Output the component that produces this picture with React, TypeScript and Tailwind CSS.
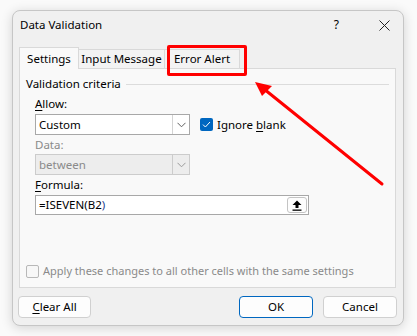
import React from "react";

const font = { fontFamily: '"Segoe UI", "Noto Sans", "Open Sans", sans-serif' };

function Chevron({ color = "#606060" }: { color?: string }) {
  return (
    <svg width="9" height="6" viewBox="0 0 9 6" fill="none">
      <path d="M0.5 0.8 L4.5 4.8 L8.5 0.8" stroke={color} strokeWidth="1" />
    </svg>
  );
}

function Select({ value, disabled }: { value: string; disabled?: boolean }) {
  return (
    <div
      className={`flex h-[21px] w-[155px] items-stretch border ${
        disabled ? "border-[#cccccc] bg-[#ededed] text-[#8a8a8a]" : "border-[#a8a8a8] bg-white text-black"
      }`}
    >
      <div className="flex flex-1 items-center pl-[3px] text-[11.5px]">{value}</div>
      <div
        className={`flex w-[17px] items-center justify-center border-l ${
          disabled ? "border-[#cccccc]" : "border-[#d4d4d4]"
        }`}
      >
        <Chevron color={disabled ? "#9a9a9a" : "#606060"} />
      </div>
    </div>
  );
}

export default function App() {
  return (
    <div
      className="relative h-[336px] w-[417px] overflow-hidden bg-[#fafafa] pl-[12px] pt-[10px] text-[11px] leading-[14px] text-black"
      style={font}
    >
      <div className="flex h-[316px] w-[392px] flex-col rounded-[8px] border border-[#c6c6c6] bg-[#f0f0f0] shadow-[0_2px_12px_rgba(0,0,0,0.16)]">
        {/* title bar */}
        <div className="flex h-[36px] items-start pl-[7px] pr-[13px] pt-[7px]">
          <span className="text-[11.5px]">Data Validation</span>
          <span className="ml-auto mr-[40px] text-[12px]">?</span>
          <svg className="mt-[2px]" width="11" height="11" viewBox="0 0 11 11">
            <path d="M0.5 0.5 L10.5 10.5 M10.5 0.5 L0.5 10.5" stroke="#222" strokeWidth="1" />
          </svg>
        </div>

        {/* tabs */}
        <div className="flex items-end pl-[6px]">
          <div className="relative z-10 -mb-px flex h-[22px] w-[60px] items-center justify-center border border-b-0 border-[#d9d9d9] bg-[#f9f9f9] text-[11.5px]">
            Settings
          </div>
          <div className="flex h-[19px] w-[86px] items-center justify-center border-t border-r border-[#d9d9d9] bg-[#f3f3f3] text-[11.5px]">
            Input Message
          </div>
          <div className="flex h-[19px] w-[75px] items-center justify-center border-t border-r border-[#d9d9d9] bg-[#f3f3f3] text-[11.5px]">
            Error Alert
          </div>
        </div>

        {/* panel */}
        <div className="ml-[6px] flex h-[220px] w-[377px] flex-col border border-[#d9d9d9] bg-[#f9f9f9]">
          <div className="mt-[8px] flex h-[14px] items-center pl-[6px] pr-[6px] text-[11.5px]">
            <span>Validation criteria</span>
            <div className="ml-[5px] h-px flex-1 bg-[#dcdcdc]" />
          </div>

          <div className="pl-[15px] text-[11.5px]">
            <div className="mt-[6px] h-[14px]">
              <span className="underline underline-offset-2">A</span>llow:
            </div>
            <div className="mt-[3px] flex items-center">
              <Select value="Custom" />
              <div className="ml-[10px] flex h-[13px] w-[13px] items-center justify-center rounded-[2px] bg-[#0067c0]">
                <svg width="9" height="7" viewBox="0 0 9 7" fill="none">
                  <path d="M1 3.6 L3.4 6 L8 1" stroke="white" strokeWidth="1" />
                </svg>
              </div>
              <span className="ml-[4px]">
                Ignore <span className="underline underline-offset-2">b</span>lank
              </span>
            </div>
            <div className="mt-[3px] h-[14px] text-[#8a8a8a]">Data:</div>
            <div className="mt-[2px]">
              <Select value="between" disabled />
            </div>
            <div className="mt-[3px] h-[14px]">
              <span className="underline underline-offset-2">F</span>ormula:
            </div>
            <div className="mt-[3px] flex h-[20px] w-[274px] items-center border border-[#a8a8a8] bg-white pl-[3px] pr-[1px]">
              <span>
                =ISEVEN(B2<span className="text-[#1e3f8f]">)</span>
              </span>
              <div className="ml-auto flex h-[16px] w-[20px] items-center justify-center rounded-[3px] border border-[#c4c4c4] bg-[#fdfdfd]">
                <svg width="10" height="11" viewBox="0 0 10 11">
                  <path d="M5 0.5 L9.5 5 L6.5 5 L6.5 8 L3.5 8 L3.5 5 L0.5 5 Z" fill="#000" />
                  <rect x="0.5" y="9.5" width="9" height="1.3" fill="#000" />
                </svg>
              </div>
            </div>
          </div>

          <div className="mb-[9px] mt-auto flex h-[14px] items-center pl-[6px] text-[11px] text-[#8a8a8a]">
            <div className="h-[13px] w-[13px] rounded-[2px] border border-[#b8b8b8] bg-[#f7f7f7]" />
            <span className="ml-[4px]">Apply these changes to all other cells with the same settings</span>
          </div>
        </div>

        {/* buttons */}
        <div className="mt-[8px] flex pl-[5px] pr-[6px] text-[11.5px]">
          <div className="flex h-[22px] w-[73px] items-center justify-center rounded-[4px] border border-[#d0d0d0] bg-[#fdfdfd]">
            <span>
              <span className="underline underline-offset-2">C</span>lear All
            </span>
          </div>
          <div className="ml-auto flex h-[22px] w-[74px] items-center justify-center rounded-[4px] border border-[#0067c0] bg-[#fdfdfd]">
            OK
          </div>
          <div className="ml-[10px] flex h-[22px] w-[74px] items-center justify-center rounded-[4px] border border-[#d0d0d0] bg-[#fdfdfd]">
            Cancel
          </div>
        </div>
      </div>

      {/* annotation */}
      <div className="absolute left-[167px] top-[45px] h-[31px] w-[80px] rounded-[2px] border-[3px] border-[#ff0000]" />
      <svg className="absolute left-0 top-0" width="417" height="336" viewBox="0 0 417 336">
        <line x1="382" y1="184" x2="264" y2="89" stroke="#ff0000" strokeWidth="3" strokeLinecap="round" />
        <polygon points="255,82 272,86 262,96" fill="#ff0000" />
      </svg>
    </div>
  );
}
